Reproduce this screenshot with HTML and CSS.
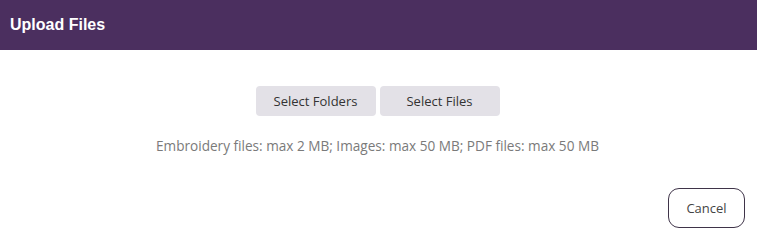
FILE: index.html
```html
<!DOCTYPE html>
<html lang="en">
<head>
    <meta charset="UTF-8">
    <title>Upload Files</title>
    <link rel="stylesheet" href="styles.css">
</head>
<body>
    <div class="dialog">
        <div class="dialog-header">Upload Files</div>
        <div class="dialog-body">
            <div class="select-buttons">
                <button class="select-button">Select Folders</button>
                <button class="select-button">Select Files</button>
            </div>
            <p class="limits">Embroidery files: max 2 MB; Images: max 50 MB; PDF files: max 50 MB</p>
        </div>
        <div class="dialog-footer">
            <button class="cancel-button">Cancel</button>
        </div>
    </div>
</body>
</html>
```

FILE: styles.css
```css
body, html {
    margin: 0;
    padding: 0;
    background: #fff;
    font-family: "Open Sans", Lato, sans-serif;
}

.dialog {
    width: 757px;
    height: 242px;
    display: flex;
    flex-direction: column;
}

.dialog-header {
    height: 50px;
    box-sizing: border-box;
    padding: 0 10px;
    display: flex;
    align-items: center;
    background: #4b2f5f;
    color: #fff;
    font-family: "Liberation Sans", Arial, sans-serif;
    font-weight: bold;
    font-size: 16px;
}

.dialog-body {
    padding-top: 36px;
    padding-right: 2px;
    display: flex;
    flex-direction: column;
    align-items: center;
}

.select-buttons {
    display: flex;
    gap: 4px;
}

.select-button {
    width: 120px;
    height: 30px;
    border: none;
    border-radius: 4px;
    background: #e3e1e7;
    color: #333;
    font-family: "Open Sans", sans-serif;
    font-size: 13px;
    cursor: pointer;
}

.limits {
    margin: 20px 0 0;
    color: #7a7a7a;
    font-size: 13.6px;
}

.dialog-footer {
    margin-top: auto;
    padding: 0 12px 14px 0;
    display: flex;
    justify-content: flex-end;
}

.cancel-button {
    width: 77px;
    height: 40px;
    background: #fff;
    border: 1px solid #3f3449;
    border-radius: 11px;
    color: #444;
    font-family: "Open Sans", sans-serif;
    font-size: 13px;
    cursor: pointer;
}
```
